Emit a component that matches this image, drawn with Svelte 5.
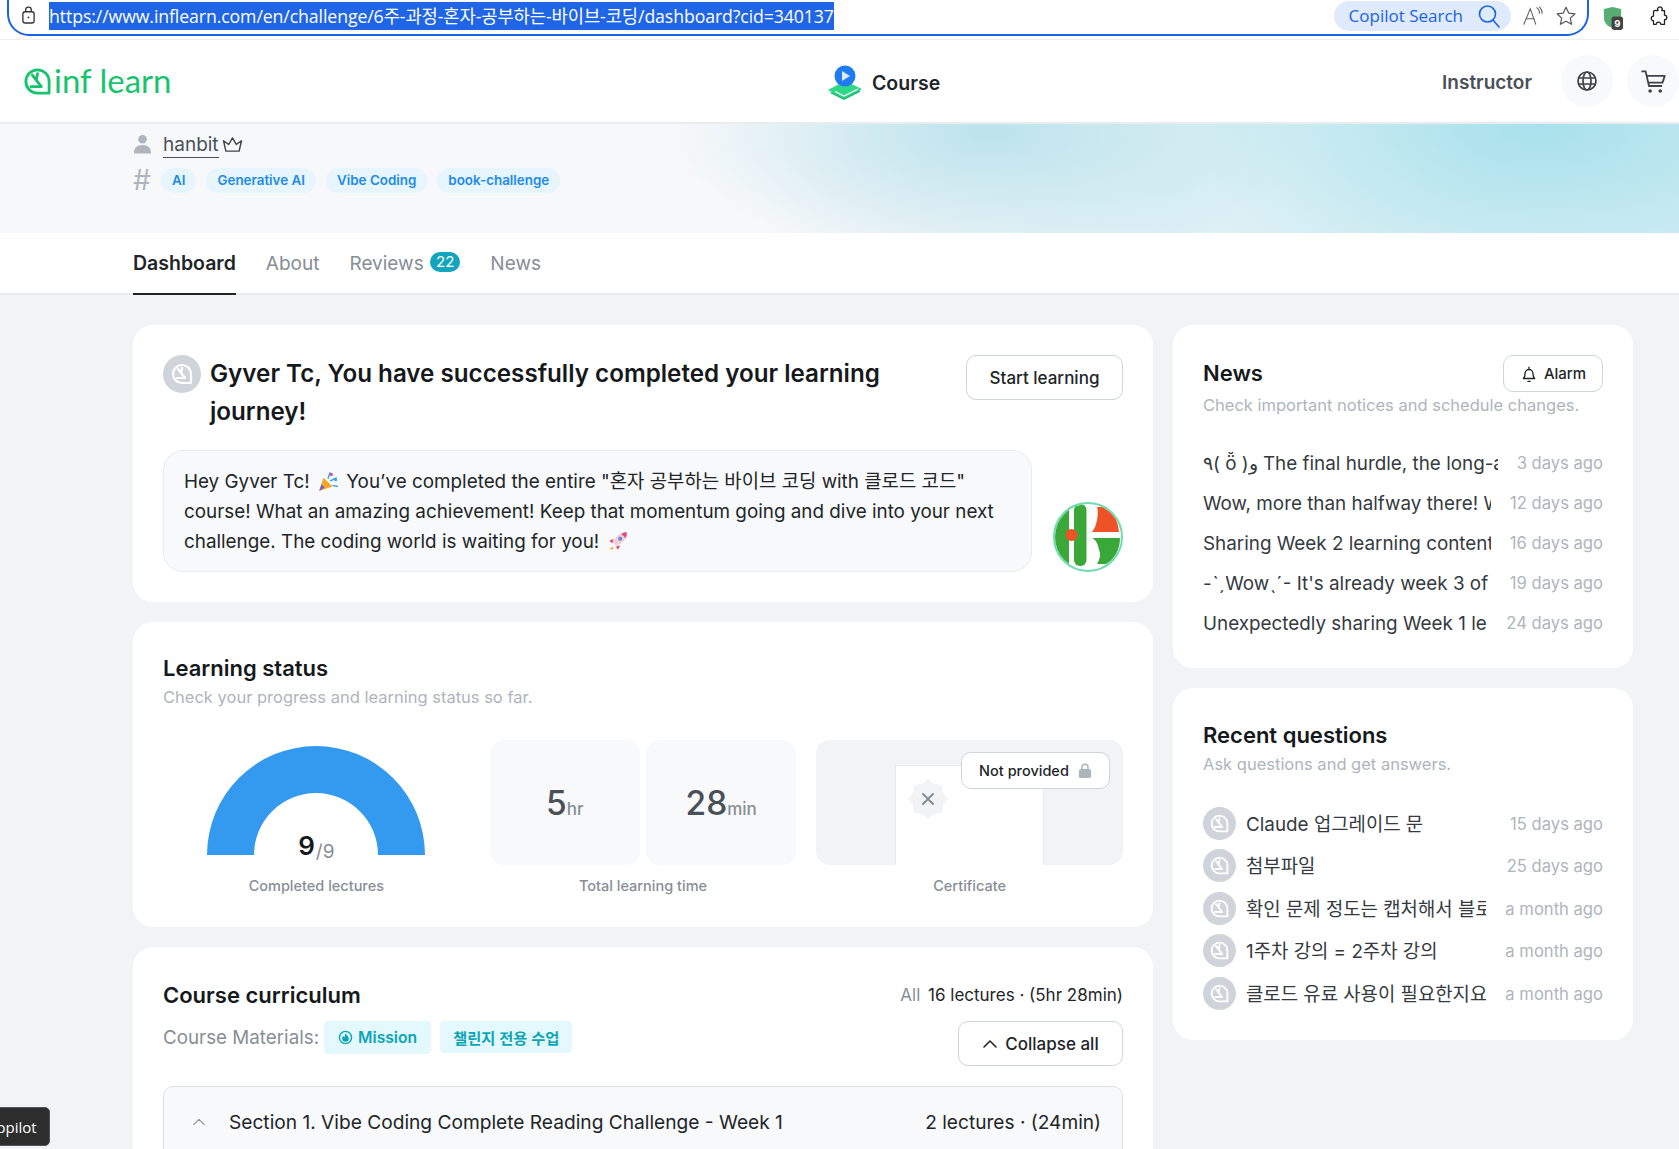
<script>
    const tags = ["AI", "Generative AI", "Vibe Coding", "book-challenge"];
    const tabs = ["About"];
    const news = [
        { title: "٩( ö̆ )و The final hurdle, the long-awaited week has finally arrived", time: "3 days ago" },
        { title: "Wow, more than halfway there! Week 4 of the challenge", time: "12 days ago" },
        { title: "Sharing Week 2 learning content and the next mission", time: "16 days ago" },
        { title: "-ˋˏWowˎˊ- It's already week 3 of Vibe Coding", time: "19 days ago" },
        { title: "Unexpectedly sharing Week 1 learning", time: "24 days ago" }
    ];
    const questions = [
        { title: "Claude 업그레이드 문", time: "15 days ago" },
        { title: "첨부파일", time: "25 days ago" },
        { title: "확인 문제 정도는 캡처해서 블로그에 올려도 될까요", time: "a month ago" },
        { title: "1주차 강의 = 2주차 강의", time: "a month ago" },
        { title: "클로드 유료 사용이 필요한지요", time: "a month ago" }
    ];
</script>

{#snippet leaf(color)}
    <svg viewBox="0 0 24 24" fill="none" stroke={color} stroke-width="2.2" stroke-linecap="round" stroke-linejoin="round">
        <path d="M12 3a9 9 0 0 0 0 18h9v-9a9 9 0 0 0-9-9z" />
        <path d="M8 7l7 9h-8M11 11l1-5" />
    </svg>
{/snippet}

<div class="page">
    <div class="browser">
        <div class="urlbar">
            <svg class="lock" viewBox="0 0 16 20" fill="none" stroke="#333" stroke-width="1.4">
                <rect x="2" y="6" width="12" height="12" rx="2.5" />
                <path d="M5 6V4a3 3 0 0 1 6 0v2" />
                <circle cx="8" cy="12" r="1" fill="#333" stroke="none" />
            </svg>
            <span class="url">https://www.inflearn.com/en/challenge/6주-과정-혼자-공부하는-바이브-코딩/dashboard?cid=340137</span>
            <div class="copilot-search">
                <span>Copilot Search</span>
                <svg viewBox="0 0 24 24" fill="none" stroke="#1a63e6" stroke-width="1.6" stroke-linecap="round">
                    <circle cx="10.5" cy="10" r="8" />
                    <path d="M16 16l6 7" />
                </svg>
            </div>
            <svg class="bar-icon" viewBox="0 0 24 24" fill="none" stroke="#666" stroke-width="1.2" stroke-linecap="round">
                <path d="M2 21L9 4l6 17M4.5 15h9M16 3c2 1 3 3 3 6M19 2c2 2 3 4 3 7" />
            </svg>
            <svg class="bar-icon" viewBox="0 0 24 24" fill="none" stroke="#555" stroke-width="1.3" stroke-linejoin="round">
                <path d="M12 2.5l2.9 6.3 6.9.8-5.1 4.7 1.4 6.8-6.1-3.4-6.1 3.4 1.4-6.8-5.1-4.7 6.9-.8z" />
            </svg>
        </div>
        <div class="ext">
            <svg viewBox="0 0 24 26">
                <path d="M3 3l9-2 9 2v9c0 6-4 9-9 11-5-2-9-5-9-11z" fill="#57ad74" />
                <rect x="11" y="11" width="12" height="14" rx="3" fill="#444" />
                <text x="17" y="22" font-size="10" font-weight="700" fill="#fff" text-anchor="middle" font-family="Inter, sans-serif">9</text>
            </svg>
        </div>
        <svg class="puzzle" viewBox="0 0 24 24" fill="none" stroke="#222" stroke-width="1.4" stroke-linejoin="round">
            <path d="M9 5h2a2.5 2.5 0 1 1 4 0h3v5a2.5 2.5 0 1 1 0 5v5h-4a2.5 2.5 0 1 0-5 0H6v-4a2.5 2.5 0 1 1 0-5V7a2 2 0 0 1 3-2z" />
        </svg>
    </div>

    <header class="topbar">
        <div class="logo">
            <span class="logo-mark">{@render leaf("#17c46e")}</span>
            <span class="logo-text">inf learn</span>
        </div>
        <div class="course-link">
            <svg viewBox="0 0 36 36">
                <path d="M1 25L18 16l17 8-18 10z" fill="#2fd886" />
                <path d="M5 27l12 6 16-8v2l-16 8L3 28z" fill="#1fbf73" />
                <path d="M8 26.500l9 4.500 14-7" stroke="#fff" stroke-width="1.200" fill="none" />
                <circle cx="18" cy="11" r="10.500" fill="#1f7bf2" />
                <path d="M15 6l8 5-8 5z" fill="#dce9fb" />
            </svg>
            <span>Course</span>
        </div>
        <div class="top-right">
            <span class="instructor">Instructor</span>
            <span class="round-btn">
                <svg viewBox="0 0 24 24" fill="none" stroke="#3e4348" stroke-width="1.700">
                    <circle cx="12" cy="12" r="9" />
                    <ellipse cx="12" cy="12" rx="4" ry="9" />
                    <path d="M3 9h18M3 15h18" />
                </svg>
            </span>
            <span class="round-btn">
                <svg class="cart" viewBox="0 0 24 24" fill="none" stroke="#3e4348" stroke-width="1.600" stroke-linecap="round" stroke-linejoin="round">
                    <path d="M2 3h3l3 13h11M6 7h16l-2 6H7.500" />
                    <circle cx="9" cy="20.500" r="0.800" />
                    <circle cx="18" cy="20.500" r="0.800" />
                </svg>
            </span>
        </div>
    </header>

    <section class="hero">
        <div class="hero-user">
            <svg class="hero-ic" viewBox="0 0 20 20" fill="#aeb5bc">
                <circle cx="10" cy="5" r="4.500" />
                <path d="M1 20c0-6 3-9 9-9s9 3 9 9z" />
            </svg>
            <span class="username">hanbit</span>
            <svg class="crown" viewBox="0 0 22 18" fill="none" stroke="#3e4348" stroke-width="1.500" stroke-linejoin="round">
                <path d="M4 16L1.500 5 7 9l4-7 4 7 5.500-4L18 16z" />
            </svg>
        </div>
        <div class="hero-tags">
            <span class="hash">#</span>
            {#each tags as tag}
                <span class="tag">{tag}</span>
            {/each}
        </div>
    </section>

    <nav class="tabs">
        <span class="tab active">Dashboard</span>
        {#each tabs as tab}
            <span class="tab">{tab}</span>
        {/each}
        <span class="tab">Reviews <span class="count">22</span></span>
        <span class="tab">News</span>
    </nav>

    <main class="layout">
        <div class="col-main">
            <section class="card greet">
                <div class="greet-head">
                    <span class="avatar big">{@render leaf("#fff")}</span>
                    <h1>Gyver Tc, You have successfully completed your learning journey!</h1>
                    <button class="btn start">Start learning</button>
                </div>
                <div class="greet-body">
                    <p class="bubble">
                        Hey Gyver Tc!
                        <svg class="emoji" viewBox="0 0 20 20">
                            <path d="M2 19l4-12 8 8z" fill="#f5a623" />
                            <path d="M4 13l3 3-5 3z" fill="#7b5cd6" />
                            <circle cx="13" cy="4" r="1.500" fill="#e8487d" />
                            <circle cx="17" cy="9" r="1.300" fill="#3aa0e8" />
                            <path d="M10 8l2-6M12 10l6-3M14 14l5 1" stroke="#3aa0e8" stroke-width="1.300" />
                        </svg>
                        You’ve completed the entire "혼자 공부하는 바이브 코딩 with 클로드 코드" course! What an amazing achievement! Keep that momentum going and dive into your next challenge. The coding world is waiting for you!
                        <svg class="emoji" viewBox="0 0 20 20">
                            <path d="M18 2c-6 0-11 4-12 10l2 2c6-1 10-6 10-12z" fill="#f4cdd8" />
                            <path d="M18 2c-2 0-4 .5-5 1.500l4 4c.7-1.500 1-3.500 1-5.500z" fill="#e8487d" />
                            <circle cx="12" cy="8" r="1.800" fill="#4d8fe0" />
                            <path d="M6 8l-4 2 3 2zM12 14l-2 4-2-3z" fill="#e8487d" />
                            <path d="M5 15l-3 3 4-1z" fill="#f5a623" />
                        </svg>
                    </p>
                    <svg class="bot" viewBox="0 0 70 70">
                        <defs>
                            <clipPath id="botclip"><circle cx="35" cy="35" r="33" /></clipPath>
                        </defs>
                        <circle cx="35" cy="35" r="34" fill="#fff" stroke="#6fdcae" stroke-width="2" />
                        <g clip-path="url(#botclip)">
                            <path d="M0 0h16v70H0z" fill="#3aa838" />
                            <rect x="21" y="2" width="12.500" height="62" rx="6" fill="#3aa838" />
                            <circle cx="18.500" cy="33" r="6" fill="#ee5227" />
                            <path d="M44 5h8c8 2 13 14 14 25H39c5-5 7-20 5-25z" fill="#ee5227" />
                            <path d="M39 36h28c0 12-6 22-14 26H44c3-5 4-10 2-14-1-6-3-10-7-12z" fill="#3aa838" />
                        </g>
                    </svg>
                </div>
            </section>

            <section class="card status">
                <h2>Learning status</h2>
                <p class="sub">Check your progress and learning status so far.</p>
                <div class="status-grid">
                    <div class="stat">
                        <div class="gauge">
                            <svg viewBox="0 0 218 109">
                                <path d="M0 109a109 109 0 0 1 218 0h-47a62 62 0 0 0-124 0z" fill="#339af0" />
                            </svg>
                            <div class="gauge-value"><b>9</b><span>/9</span></div>
                        </div>
                        <div class="stat-label">Completed lectures</div>
                    </div>
                    <div class="stat">
                        <div class="time-boxes">
                            <div class="time-box"><b>5</b><span>hr</span></div>
                            <div class="time-box"><b>28</b><span>min</span></div>
                        </div>
                        <div class="stat-label">Total learning time</div>
                    </div>
                    <div class="stat">
                        <div class="cert">
                            <div class="paper">
                                <svg class="seal" viewBox="0 0 40 40">
                                    <path d="M20 0l6 5 8 1 1 8 5 6-5 6-1 8-8 1-6 5-6-5-8-1-1-8-5-6 5-6 1-8 8-1z" fill="#f1f3f5" />
                                    <path d="M15 15l10 10M25 15L15 25" stroke="#868e96" stroke-width="2" stroke-linecap="round" />
                                </svg>
                            </div>
                            <div class="not-provided">
                                Not provided
                                <svg viewBox="0 0 14 16" fill="#adb5bd">
                                    <path d="M3 7V4.500a4 4 0 0 1 8 0V7h-1.600V4.500a2.400 2.400 0 0 0-4.800 0V7z" />
                                    <rect x="0.500" y="6.500" width="13" height="9.500" rx="2" />
                                </svg>
                            </div>
                        </div>
                        <div class="stat-label">Certificate</div>
                    </div>
                </div>
            </section>

            <section class="card curriculum">
                <div class="cur-head">
                    <h2>Course curriculum</h2>
                    <div class="cur-total"><span>All</span> 16 lectures · (5hr 28min)</div>
                </div>
                <div class="cur-row">
                    <div class="materials">
                        <span class="mat-label">Course Materials:</span>
                        <span class="chip">
                            <svg viewBox="0 0 16 16" fill="none" stroke="#0ca5b8" stroke-width="1.500">
                                <circle cx="8" cy="8" r="6.500" />
                                <path d="M8 3.500c1 2 3.500 3 3.500 5.500a3.500 3.500 0 0 1-7 0c0-1 .5-2.500 1.200-2.500.5 1 1 1.200 1.300 1.200C7.500 6 7.500 4.500 8 3.500z" fill="#0ca5b8" stroke="none" />
                            </svg>
                            Mission
                        </span>
                        <span class="chip kr">챌린지 전용 수업</span>
                    </div>
                    <button class="btn collapse">
                        <svg viewBox="0 0 16 16" fill="none" stroke="#212529" stroke-width="1.600" stroke-linecap="round" stroke-linejoin="round">
                            <path d="M2 11l6-6 6 6" />
                        </svg>
                        Collapse all
                    </button>
                </div>
                <div class="section-box">
                    <svg viewBox="0 0 16 16" fill="none" stroke="#868e96" stroke-width="1.200" stroke-linecap="round" stroke-linejoin="round">
                        <path d="M2 11l6-6 6 6" />
                    </svg>
                    <span class="section-title">Section 1. Vibe Coding Complete Reading Challenge - Week 1</span>
                    <span class="section-meta">2 lectures · (24min)</span>
                </div>
            </section>
        </div>

        <aside class="col-side">
            <section class="card news">
                <div class="side-head">
                    <h2>News</h2>
                    <button class="btn alarm">
                        <svg viewBox="0 0 16 16" fill="none" stroke="#212529" stroke-width="1.200" stroke-linejoin="round" stroke-linecap="round">
                            <path d="M3 12c1-1 1.500-2 1.500-4.500a3.500 3.500 0 0 1 7 0C11.500 10 12 11 13 12zM7 14.500h2M8 2v1.500" />
                        </svg>
                        Alarm
                    </button>
                </div>
                <p class="sub">Check important notices and schedule changes.</p>
                <ul class="list">
                    {#each news as item}
                        <li class="row">
                            <span class="row-title">{item.title}</span>
                            <span class="row-time">{item.time}</span>
                        </li>
                    {/each}
                </ul>
            </section>

            <section class="card questions">
                <h2>Recent questions</h2>
                <p class="sub">Ask questions and get answers.</p>
                <ul class="list q-list">
                    {#each questions as item}
                        <li class="row">
                            <span class="avatar">{@render leaf("#fff")}</span>
                            <span class="row-title">{item.title}</span>
                            <span class="row-time">{item.time}</span>
                        </li>
                    {/each}
                </ul>
            </section>
        </aside>
    </main>

    <div class="copilot-tip"><span>Copilot</span></div>
</div>

<style>
    :global(body) {
        margin: 0;
        background: #f1f3f5;
    }
    .page {
        position: relative;
        height: 100vh;
        overflow: hidden;
        background: #f1f3f5;
        font-family: Inter, "Noto Sans CJK KR", sans-serif;
        color: #212529;
    }
    h1, h2, p, ul {
        margin: 0;
        padding: 0;
    }
    ul {
        list-style: none;
    }
    button {
        font-family: inherit;
    }

    /* browser chrome */
    .browser {
        display: flex;
        align-items: flex-start;
        height: 40px;
        background: #fff;
        border-bottom: 1px solid #eeeeee;
        box-sizing: border-box;
    }
    .urlbar {
        display: flex;
        align-items: center;
        box-sizing: border-box;
        width: 1582px;
        height: 37px;
        margin-top: -1px;
        margin-left: 7px;
        padding: 0 10px 2px 12px;
        border: 2px solid #1a63e6;
        border-top: none;
        border-radius: 0 0 22px 22px;
    }
    .lock {
        width: 15px;
        height: 19px;
        margin-right: 13px;
    }
    .url {
        background: #1f65e6;
        color: #fff;
        font-family: "Open Sans", "Noto Sans CJK KR", sans-serif;
        font-size: 17.7px;
        line-height: 28px;
        letter-spacing: -0.1px;
        white-space: nowrap;
    }
    .copilot-search {
        display: flex;
        align-items: center;
        gap: 14px;
        margin-left: auto;
        height: 30px;
        padding: 0 10px 0 15px;
        border-radius: 15px;
        background: #dfeafd;
        color: #1a63e6;
        font-family: "Open Sans", sans-serif;
        font-size: 17px;
    }
    .copilot-search svg {
        width: 24px;
        height: 26px;
    }
    .bar-icon {
        width: 22px;
        height: 22px;
        margin-left: 11px;
    }
    .ext {
        margin-left: 12px;
        margin-top: 6px;
    }
    .ext svg {
        width: 23px;
        height: 25px;
    }
    .puzzle {
        width: 22px;
        height: 24px;
        margin-left: 24px;
        margin-top: 5px;
    }

    /* header */
    .topbar {
        position: relative;
        display: flex;
        align-items: center;
        justify-content: space-between;
        height: 84px;
        box-sizing: border-box;
        padding-left: 22px;
        background: #fff;
        border-bottom: 2px solid #e9ecef;
    }
    .logo {
        display: flex;
        align-items: center;
        color: #17c46e;
    }
    .logo-mark {
        display: block;
        width: 31px;
        height: 31px;
    }
    .logo-text {
        font-family: Lato, sans-serif;
        font-weight: 400;
        font-size: 33px;
        line-height: 40px;
        margin-left: 1px;
        margin-top: -2px;
    }
    .course-link {
        position: absolute;
        left: 827px;
        top: 25px;
        display: flex;
        align-items: center;
        gap: 9px;
        font-size: 19.5px;
        font-weight: 600;
    }
    .course-link svg {
        width: 36px;
        height: 36px;
    }
    .top-right {
        display: flex;
        align-items: center;
    }
    .instructor {
        padding-top: 3px;
        font-size: 19px;
        font-weight: 600;
        color: #495057;
        margin-right: 29px;
    }
    .round-btn {
        display: flex;
        align-items: center;
        justify-content: center;
        width: 52px;
        height: 52px;
        border-radius: 50%;
        background: #f8f9fa;
    }
    .round-btn + .round-btn {
        margin-left: 14px;
    }
    .round-btn svg {
        width: 24px;
        height: 24px;
    }
    .round-btn svg.cart {
        width: 27px;
        height: 27px;
    }

    /* hero */
    .hero {
        height: 109px;
        box-sizing: border-box;
        padding: 8px 133px 0;
        background:
            radial-gradient(ellipse 350px 170px at 1540px 0, #a8e1ec 0%, rgba(168, 225, 236, 0) 100%),
            radial-gradient(ellipse 320px 130px at 990px 10px, #bde3ed 0%, rgba(189, 227, 237, 0) 100%),
            linear-gradient(100deg, #f7f8fa 46%, #edf4f7 56%, #dcf0f5 70%, #d4edf3 100%);
    }
    .hero-user {
        display: flex;
        align-items: center;
        height: 24px;
    }
    .hero-ic {
        width: 19px;
        height: 20px;
        margin-right: 11px;
    }
    .username {
        font-size: 19px;
        color: #495057;
        border-bottom: 1px solid #495057;
        line-height: 25px;
        margin-top: 1px;
    }
    .crown {
        width: 21px;
        height: 17px;
        margin-left: 3px;
    }
    .hero-tags {
        display: flex;
        align-items: center;
        gap: 10px;
        margin-top: 12px;
    }
    .hash {
        width: 18px;
        font-size: 28px;
        line-height: 25px;
        color: #aeb5bc;
    }
    .tag {
        height: 25px;
        padding: 0 11px;
        border-radius: 13px;
        background: #e7f5ff;
        color: #228be6;
        font-size: 13.4px;
        font-weight: 600;
        line-height: 25px;
    }

    /* tabs */
    .tabs {
        display: flex;
        gap: 30px;
        height: 62px;
        box-sizing: border-box;
        padding-left: 133px;
        background: #fff;
        border-bottom: 2px solid #e9ecef;
    }
    .tab {
        display: flex;
        align-items: center;
        height: 60px;
        font-size: 19px;
        color: #868e96;
        white-space: pre;
    }
    .tab.active {
        font-size: 19.5px;
        color: #212529;
        font-weight: 600;
        border-bottom: 2px solid #212529;
    }
    .count {
        display: inline-block;
        height: 20px;
        padding: 0 6px;
        margin-left: 1px;
        margin-top: -2px;
        border-radius: 10px;
        background: #12a5bd;
        color: #fff;
        font-size: 15px;
        line-height: 20px;
    }

    /* columns */
    .layout {
        display: flex;
        gap: 20px;
        padding: 30px 0 0 133px;
    }
    .col-main {
        display: flex;
        flex-direction: column;
        gap: 20px;
        width: 1020px;
    }
    .col-side {
        display: flex;
        flex-direction: column;
        gap: 20px;
        width: 460px;
    }
    .card {
        box-sizing: border-box;
        padding: 30px;
        border-radius: 20px;
        background: #fff;
    }
    h2 {
        font-size: 22px;
        font-weight: 600;
        line-height: 30px;
        color: #16191c;
    }
    .sub {
        margin-top: 1px;
        font-size: 16.5px;
        line-height: 26px;
        color: #adb5bd;
    }
    .btn {
        box-sizing: border-box;
        border: 1px solid #ced4da;
        border-radius: 10px;
        background: #fff;
        color: #212529;
        font-weight: 500;
    }
    .avatar {
        flex: none;
        display: flex;
        align-items: center;
        justify-content: center;
        box-sizing: border-box;
        width: 33px;
        height: 33px;
        padding: 6px;
        border-radius: 50%;
        background: #ced4da;
    }
    .avatar.big {
        width: 38px;
        height: 38px;
        padding: 7px;
    }

    /* greeting */
    .greet {
        height: 277px;
    }
    .greet-head {
        display: flex;
        align-items: flex-start;
    }
    .greet-head h1 {
        width: 700px;
        margin-left: 9px;
        margin-right: auto;
        font-size: 24.2px;
        font-weight: 600;
        line-height: 37.5px;
        color: #16191c;
    }
    .start {
        width: 157px;
        height: 45px;
        font-size: 17px;
    }
    .greet-body {
        display: flex;
        align-items: flex-end;
        justify-content: space-between;
        margin-top: 20px;
    }
    .bubble {
        box-sizing: border-box;
        width: 869px;
        height: 122px;
        padding: 16px 20px;
        border: 1px solid #e9ecef;
        border-radius: 20px;
        background: #f8f9fa;
        font-size: 18.85px;
        line-height: 30px;
        color: #212529;
    }
    .emoji {
        width: 22px;
        height: 22px;
        vertical-align: -4px;
        margin: 0 2px;
    }
    .bot {
        width: 70px;
        height: 70px;
    }

    /* learning status */
    .status {
        height: 305px;
        padding-top: 31px;
    }
    .status-grid {
        display: grid;
        grid-template-columns: repeat(3, 1fr);
        gap: 20px;
        margin-top: 30px;
    }
    .stat {
        display: flex;
        flex-direction: column;
        align-items: center;
    }
    .stat-label {
        margin-top: 12px;
        font-size: 14.5px;
        font-weight: 500;
        line-height: 18px;
        color: #868e96;
    }
    .gauge {
        position: relative;
        box-sizing: border-box;
        width: 218px;
        height: 125px;
        padding-top: 6px;
    }
    .gauge svg {
        display: block;
        width: 218px;
        height: 109px;
    }
    .gauge-value {
        position: absolute;
        left: 0;
        right: 0;
        top: 90px;
        text-align: center;
        line-height: 32px;
    }
    .gauge-value b {
        font-size: 26px;
        font-weight: 600;
        color: #16191c;
    }
    .gauge-value span {
        font-size: 19px;
        color: #868e96;
        vertical-align: -3px;
        margin-left: 1px;
    }
    .time-boxes {
        display: flex;
        gap: 6px;
        width: 100%;
        height: 125px;
    }
    .time-box {
        flex: 1;
        display: flex;
        align-items: baseline;
        justify-content: center;
        padding-top: 43px;
        box-sizing: border-box;
        border-radius: 14px;
        background: #f8f9fa;
        color: #495057;
    }
    .time-box b {
        font-size: 33.5px;
        font-weight: 500;
        line-height: 40px;
    }
    .time-box span {
        font-size: 17px;
        color: #868e96;
        font-weight: 500;
    }
    .cert {
        position: relative;
        display: flex;
        justify-content: center;
        box-sizing: border-box;
        width: 100%;
        height: 125px;
        padding-top: 25px;
        border-radius: 14px;
        background: #f1f3f5;
        overflow: hidden;
    }
    .paper {
        box-sizing: border-box;
        width: 149px;
        height: 100%;
        padding: 13px 0 0 12px;
        background: #fff;
        border: 1px solid #e9ecef;
        border-bottom: none;
    }
    .seal {
        display: block;
        width: 40px;
        height: 40px;
    }
    .not-provided {
        position: absolute;
        top: 12px;
        right: 13px;
        display: flex;
        align-items: center;
        justify-content: center;
        gap: 9px;
        box-sizing: border-box;
        width: 149px;
        height: 37px;
        border: 1px solid #ced4da;
        border-radius: 10px;
        background: #fff;
        font-size: 14.5px;
        font-weight: 500;
    }
    .not-provided svg {
        width: 14px;
        height: 15px;
    }

    /* curriculum */
    .curriculum {
        height: 300px;
        padding-top: 33px;
    }
    .cur-head {
        display: flex;
        align-items: center;
        justify-content: space-between;
    }
    .cur-total {
        font-size: 17px;
        color: #212529;
    }
    .cur-total span {
        color: #868e96;
        margin-right: 3px;
    }
    .cur-row {
        display: flex;
        align-items: flex-start;
        justify-content: space-between;
        margin-top: 11px;
    }
    .materials {
        display: flex;
        align-items: flex-start;
        gap: 9px;
    }
    .mat-label {
        font-size: 18.8px;
        line-height: 33px;
        color: #868e96;
        margin-right: -4px;
    }
    .chip {
        display: flex;
        align-items: center;
        gap: 5px;
        height: 33px;
        padding: 0 14px;
        border-radius: 4px;
        background: #e3f9fd;
        color: #0ca5b8;
        font-size: 15.7px;
        font-weight: 600;
    }
    .chip.kr {
        height: 32px;
        padding: 0 13px;
        font-size: 15.3px;
    }
    .chip svg {
        width: 15px;
        height: 15px;
    }
    .collapse {
        display: flex;
        align-items: center;
        justify-content: center;
        gap: 7px;
        width: 165px;
        height: 45px;
        font-size: 17px;
    }
    .collapse svg {
        width: 16px;
        height: 16px;
    }
    .section-box {
        display: flex;
        align-items: center;
        box-sizing: border-box;
        height: 120px;
        margin-top: 20px;
        padding: 0 21px 48px 28px;
        border: 1px solid #dee2e6;
        border-radius: 10px 10px 0 0;
        background: #f8f9fa;
    }
    .section-box svg {
        width: 14px;
        height: 14px;
        margin-right: 23px;
    }
    .section-title {
        font-size: 19.15px;
        color: #212529;
    }
    .section-meta {
        margin-left: auto;
        font-size: 19.1px;
    }

    /* side lists */
    .news {
        height: 343px;
    }
    .side-head {
        display: flex;
        align-items: center;
        justify-content: space-between;
    }
    .side-head h2 {
        margin-top: -2px;
    }
    .alarm {
        display: flex;
        align-items: center;
        justify-content: center;
        gap: 6px;
        width: 100px;
        height: 37px;
        font-size: 15px;
    }
    .alarm svg {
        width: 18px;
        height: 18px;
    }
    .news .sub {
        margin-top: 0;
    }
    .list {
        display: flex;
        flex-direction: column;
        margin-top: 25px;
    }
    .row {
        display: flex;
        align-items: center;
        gap: 19px;
        height: 40px;
    }
    .row-title {
        flex: 1;
        min-width: 0;
        overflow: hidden;
        white-space: nowrap;
        font-size: 18.85px;
        color: #343a40;
    }
    .row-time {
        flex: none;
        font-size: 16.6px;
        color: #adb5bd;
    }
    .questions {
        height: 352px;
        padding-top: 32px;
    }
    .q-list {
        margin-top: 25px;
    }
    .q-list .row {
        height: 42.500px;
        gap: 0;
    }
    .q-list .row-title {
        margin: -2px 19px 0 10px;
    }
    .q-list .row-time {
        margin-top: 1px;
    }
    .copilot-tip {
        position: absolute;
        left: -26px;
        top: 1107px;
        display: flex;
        align-items: center;
        height: 37px;
        padding: 0 12px;
        border: 1px solid #555;
        border-radius: 5px;
        background: #2d2d2d;
        color: #fff;
        font-family: "Open Sans", sans-serif;
        font-size: 15px;
    }
</style>
